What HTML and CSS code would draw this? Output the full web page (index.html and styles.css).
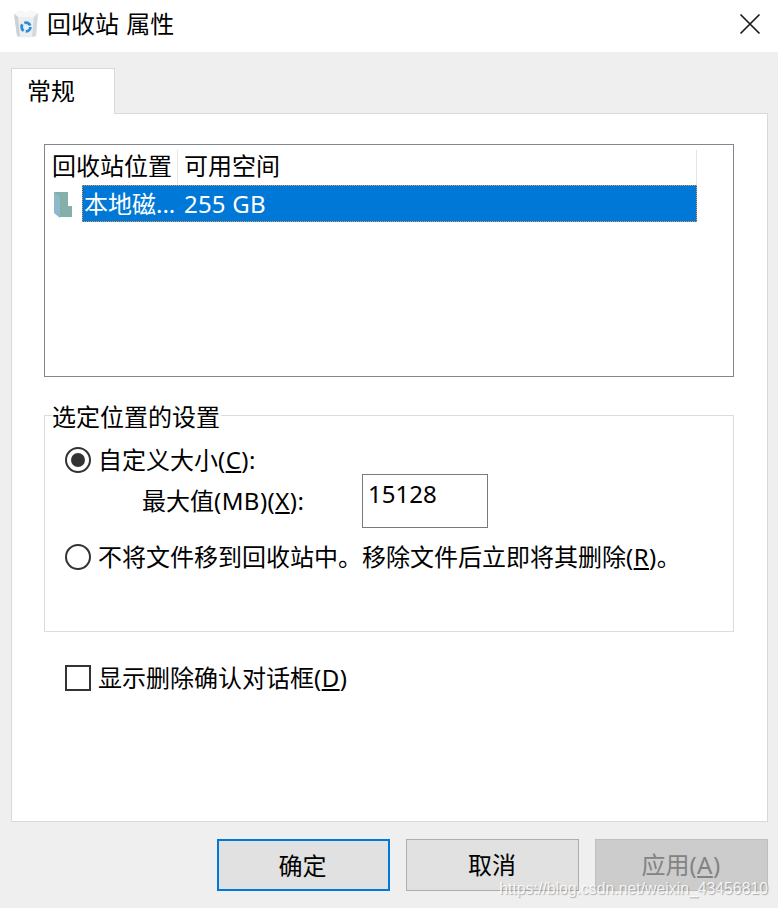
FILE: index.html
```html
<!DOCTYPE html>
<html lang="zh-CN">
<head>
  <meta charset="UTF-8" />
  <title>回收站 属性</title>
  <link rel="stylesheet" href="styles.css">
</head>
<body>

  <div class="titlebar">
    <svg class="bin-icon" width="28" height="30" viewBox="0 0 28 30">
      <path d="M1 5 L25 4 L23 27 Q13 30 4 27 Z" fill="#eceef0"/>
      <path d="M1 5 L6 1 L12 3 L18 1 L25 4 L20 8 L6 8 Z" fill="#f7f8f9"/>
      <path d="M1 5 L5 8 L7 28 L4 27 Z" fill="#ccd1d5"/>
      <path d="M25 4 L21 8 L19 28 L23 27 Z" fill="#d5d9dc"/>
      <circle cx="13" cy="18" r="4.4" fill="none" stroke="#2a8ddb" stroke-width="2.8" stroke-dasharray="7 2.2"/>
    </svg>
    <div class="title">回收站 属性</div>
    <svg class="close-icon" width="22" height="22" viewBox="0 0 22 22">
      <path d="M1.5 1.5 L20.5 20.5 M20.5 1.5 L1.5 20.5" stroke="#1a1a1a" stroke-width="1.7" fill="none"/>
    </svg>
  </div>

  <div class="main">
    <div class="tab">常规</div>

    <div class="panel">
      <div class="list">
        <div class="list-head">
          <div class="col-name">回收站位置</div>
          <div class="col-free">可用空间</div>
        </div>
        <div class="list-row">
          <svg class="folder-icon" width="20" height="28" viewBox="0 0 20 28">
            <path d="M0 1 L14 1 L14 15 L18 15 L18 26 L6 26 Z" fill="#84b0a9"/>
            <path d="M0 1 L6 6 L6 27 L0 22 Z" fill="#8db9cb"/>
          </svg>
          <div class="row-selected">
            <div class="col-name">本地磁...</div>
            <div class="col-free">255 GB</div>
          </div>
        </div>
      </div>

      <fieldset class="group">
        <legend>选定位置的设置</legend>
        <div class="option">
          <span class="radio checked"></span>
          <span>自定义大小<span class="latin">(<u>C</u>):</span></span>
        </div>
        <div class="size-row">
          <span class="size-label">最大值<span class="latin">(MB)(<u>X</u>):</span></span>
          <div class="size-input">15128</div>
        </div>
        <div class="option">
          <span class="radio"></span>
          <span>不将文件移到回收站中。移除文件后立即将其删除<span class="latin">(<u>R</u>)</span>。</span>
        </div>
      </fieldset>

      <div class="option confirm">
        <span class="checkbox"></span>
        <span>显示删除确认对话框<span class="latin">(<u>D</u>)</span></span>
      </div>
    </div>
  </div>

  <div class="footer">
    <div class="btn default">确定</div>
    <div class="btn">取消</div>
    <div class="btn disabled">应用<span class="latin">(<u>A</u>)</span></div>
  </div>

  <div class="watermark">https://blog.csdn.net/weixin_43456810</div>

</body>
</html>
```

FILE: styles.css
```css
/* Reset */
* {
  margin: 0; padding: 0; box-sizing: border-box;
}
html, body {
  height: 100%;
  overflow: hidden;
}
body {
  position: relative;
  display: flex;
  flex-direction: column;
  font-family: 'Noto Sans', 'Noto Sans CJK SC', sans-serif;
  font-size: 24px;
  line-height: 32px;
  color: #000;
  background: #efefef;
}
u {
  text-underline-offset: 2px;
  text-decoration-thickness: 1.5px;
}
.latin {
  letter-spacing: 0.45px;
}

/* Title bar */
.titlebar {
  height: 52px;
  flex: none;
  display: flex;
  align-items: center;
  padding: 0 17px 5px 13px;
  background: #fff;
}
.bin-icon {
  margin-right: 6px;
}
.title {
  flex: 1;
  word-spacing: 1px;
}

/* Tab and panel */
.main {
  flex: 1;
  display: flex;
  flex-direction: column;
  align-items: flex-start;
  padding: 16px 10px 0 11px;
}
.tab {
  position: relative;
  z-index: 1;
  width: 104px;
  height: 46px;
  margin-bottom: -1px;
  padding: 6px 0 0 15px;
  background: #fff;
  border: 1px solid #d9d9d9;
  border-bottom: none;
}
.panel {
  width: 100%;
  flex: 1;
  padding: 30px 33px 0 32px;
  background: #fff;
  border: 1px solid #d9d9d9;
}

/* List */
.list {
  height: 233px;
  padding-top: 1px;
  border: 1px solid #82868f;
}
.list-head {
  display: flex;
  height: 39px;
  padding-top: 4px;
}
.list-head .col-name {
  width: 133px;
  padding-left: 7px;
  white-space: nowrap;
  border-right: 1px solid #e5e5e5;
}
.list-head .col-free {
  width: 519px;
  padding-left: 6px;
  border-right: 1px solid #e5e5e5;
}
.list-row {
  display: flex;
  align-items: center;
  height: 37px;
}
.folder-icon {
  margin: 3px 0 0 9px;
  flex: none;
}
.row-selected {
  display: flex;
  align-items: center;
  width: 615px;
  height: 37px;
  margin-left: 8px;
  color: #fff;
  background: #0078d7;
  outline: 1px dotted #e8964a;
  outline-offset: -1px;
}
.row-selected .col-name {
  width: 95px;
  padding-left: 2px;
  white-space: nowrap;
}
.row-selected .col-free {
  padding-left: 7px;
  letter-spacing: 0.2px;
}

/* Location settings */
.group {
  height: 233px;
  margin-top: 22px;
  padding: 0 20px;
  border: 1px solid #dcdcdc;
}
.group legend {
  height: 32px;
  margin-left: -13px;
  padding: 0 1px 0 0;
  background: #fff;
  line-height: 36px;
}
.option {
  display: flex;
  align-items: center;
  gap: 7px;
  height: 32px;
}
.group .option:first-of-type {
  margin-top: 13px;
}
.radio, .checkbox {
  flex: none;
  width: 26px;
  height: 26px;
  border: 2px solid #333;
}
.radio {
  border-radius: 50%;
}
.radio.checked {
  border-color: #333;
  padding: 4px;
}
.radio.checked::before {
  content: "";
  display: block;
  width: 14px;
  height: 14px;
  border-radius: 50%;
  background: #333;
}
.size-row {
  display: flex;
  height: 54px;
  margin: -2px 0 13px;
  padding-left: 77px;
}
.size-label {
  width: 220px;
  padding-top: 11px;
}
.size-input {
  width: 126px;
  height: 54px;
  padding: 3px 5px;
  border: 1px solid #7a7a7a;
}
.confirm {
  margin-top: 30px;
  margin-left: 21px;
}

/* Bottom buttons */
.footer {
  flex: none;
  display: flex;
  justify-content: flex-end;
  gap: 16px;
  height: 86px;
  padding: 17px 10px 0 0;
}
.btn {
  width: 173px;
  height: 52px;
  line-height: 49px;
  padding-right: 1px;
  text-align: center;
  background: #e1e1e1;
  border: 1px solid #adadad;
}
.btn.default {
  padding-right: 2px;
  border: 2px solid #0078d7;
}
.btn.disabled {
  color: #838383;
  background: #cccccc;
  border-color: #bfbfbf;
}

/* Watermark */
.watermark {
  position: absolute;
  right: 10px;
  bottom: 9px;
  font-family: 'Liberation Sans', sans-serif;
  font-size: 15.8px;
  line-height: 20px;
  color: rgba(255, 255, 255, 0.85);
  text-shadow: 1px 1px 1px rgba(90, 90, 90, 0.45);
}
```
